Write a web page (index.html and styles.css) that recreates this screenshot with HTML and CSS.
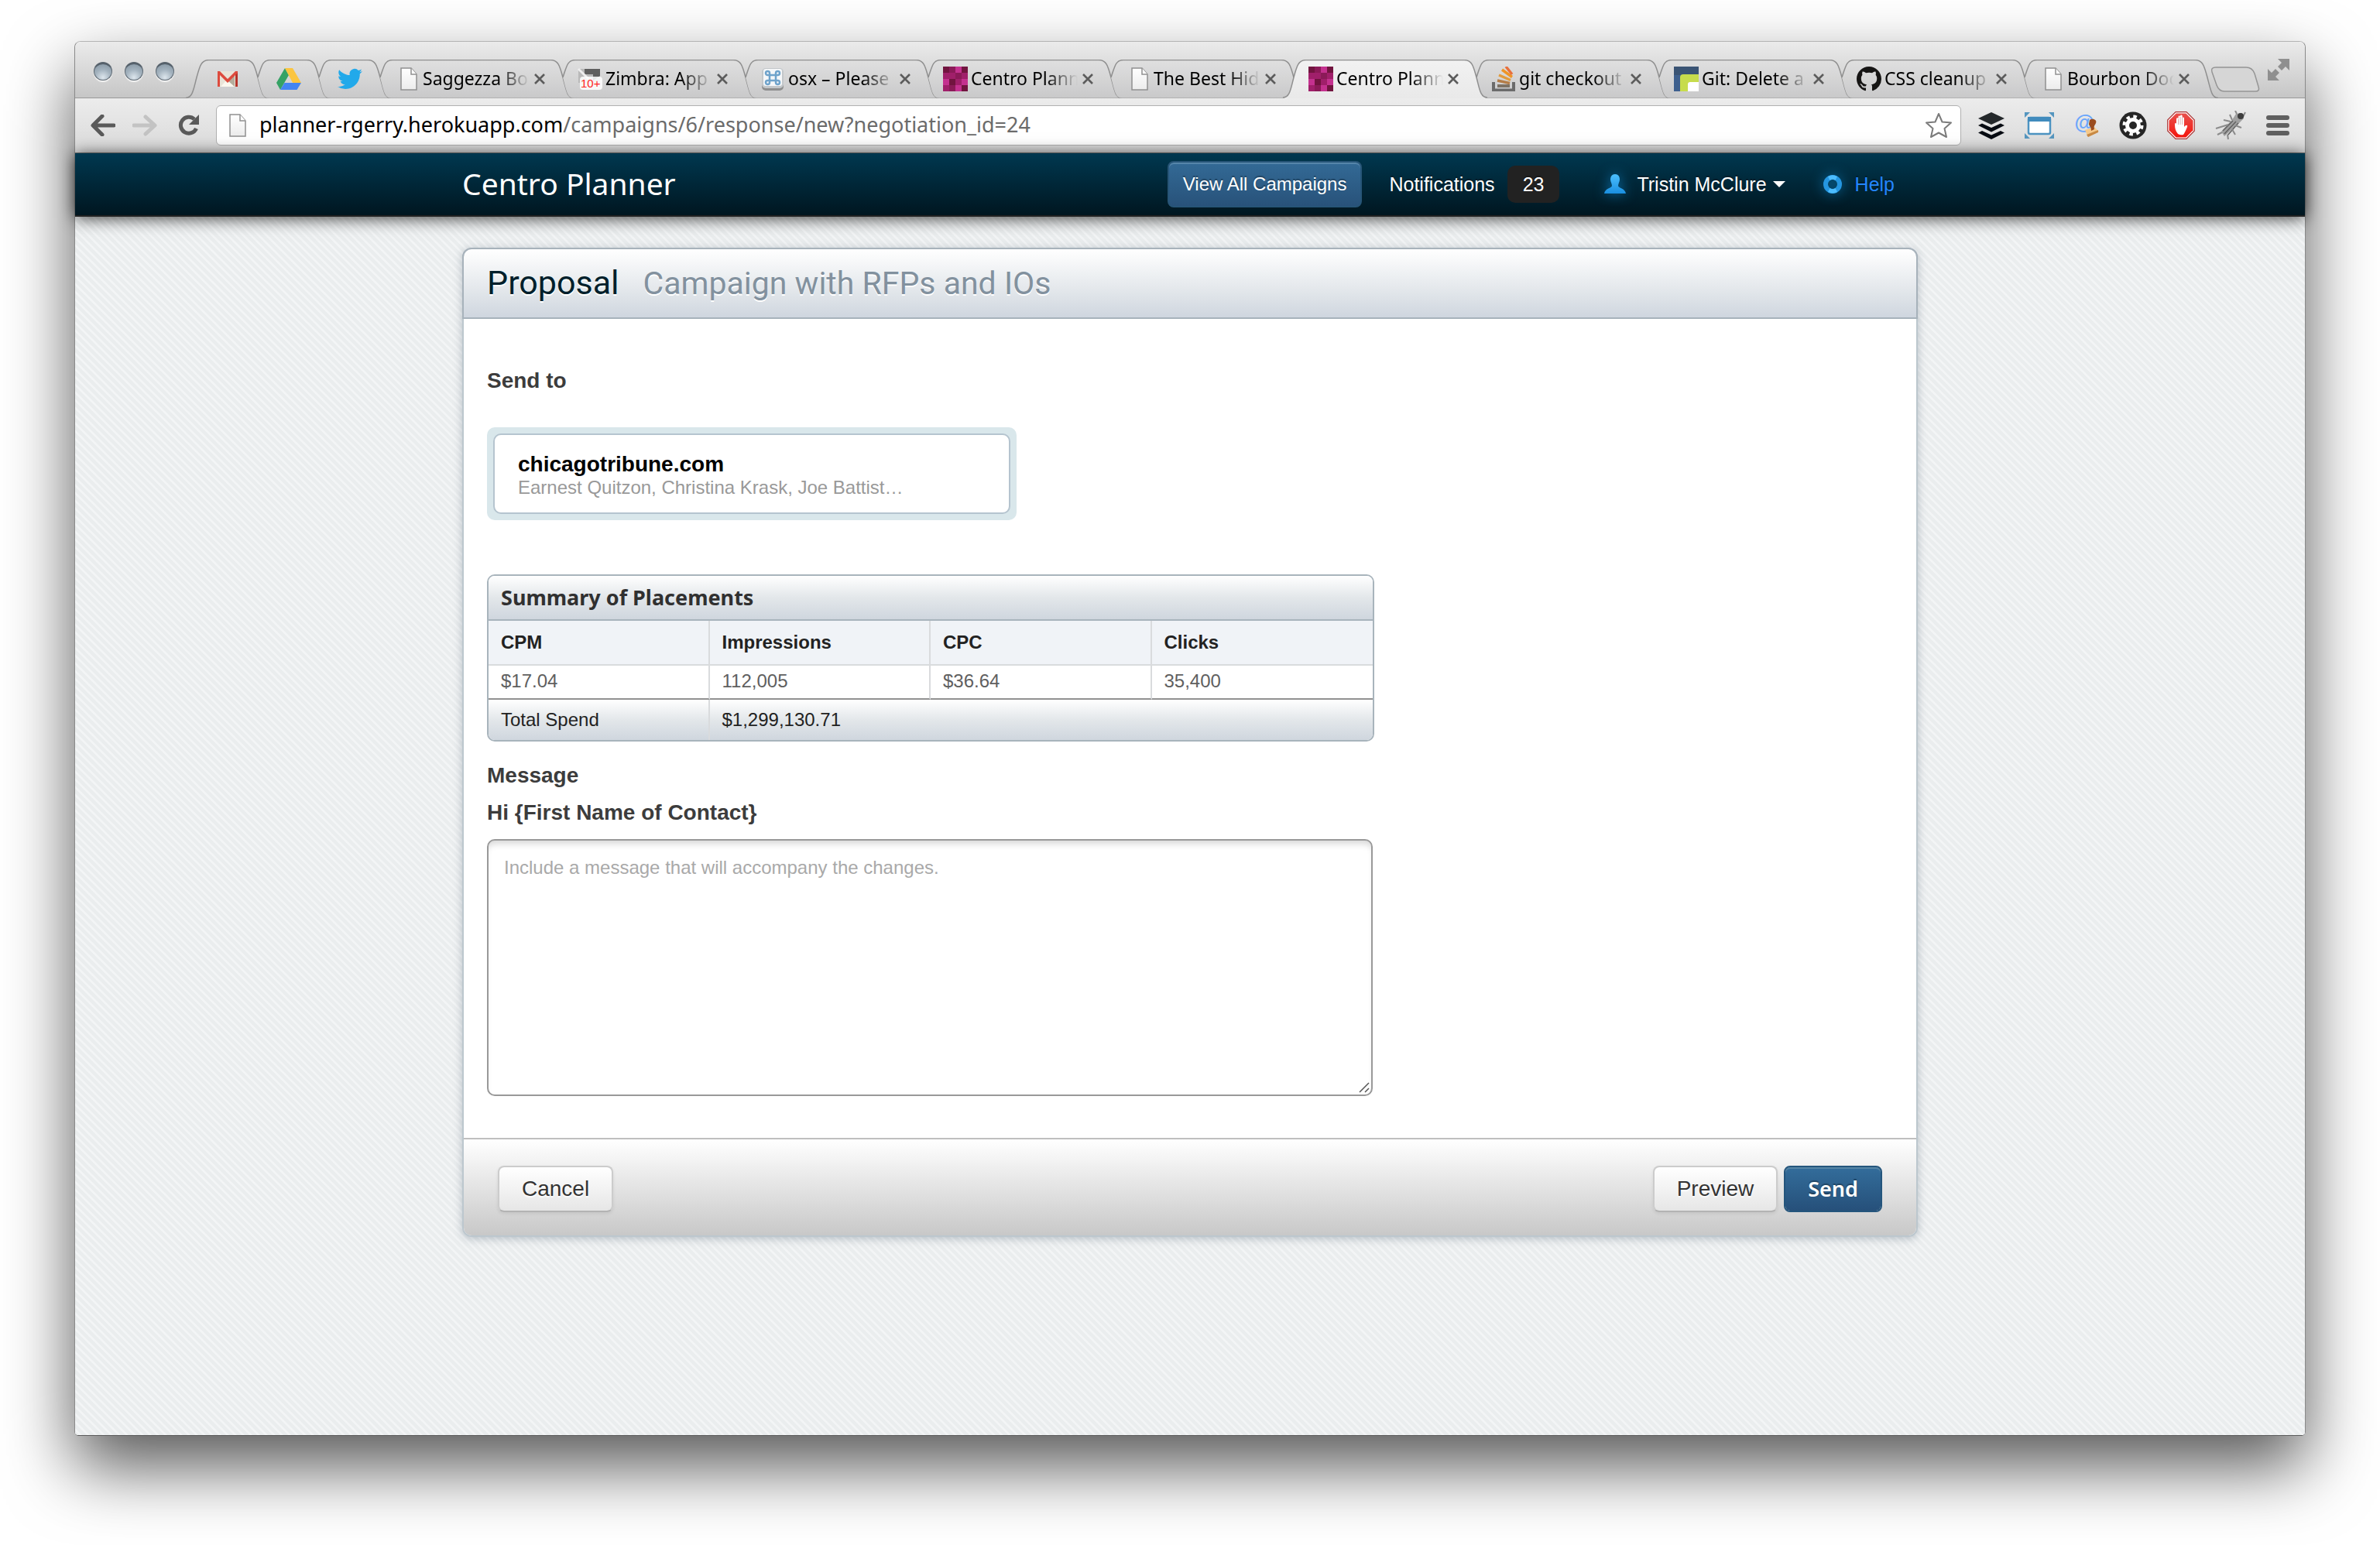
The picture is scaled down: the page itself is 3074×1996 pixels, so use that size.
FILE: index.html
```html
<!DOCTYPE html>
<html lang="en">
<head>
<meta charset="utf-8">
<title>Centro Planner</title>
<link rel="stylesheet" href="styles.css">
</head>
<body>
<svg class="defs" width="0" height="0" aria-hidden="true">
  <defs>
    <linearGradient id="tabFill" x1="0" y1="0" x2="0" y2="1"><stop offset="0" stop-color="#e0e0e0"/><stop offset="1" stop-color="#c9c9ca"/></linearGradient>
    <linearGradient id="activeFill" x1="0" y1="0" x2="0" y2="1"><stop offset="0" stop-color="#f2f2f2"/><stop offset="1" stop-color="#e9e9e9"/></linearGradient>
    <linearGradient id="pageFill" x1="0" y1="0" x2="0" y2="1"><stop offset="0" stop-color="#fff"/><stop offset="1" stop-color="#ececec"/></linearGradient>
    <linearGradient id="redFill" x1="0" y1="0" x2="0" y2="1"><stop offset="0" stop-color="#e8514c"/><stop offset="1" stop-color="#f5160f"/></linearGradient>
    <linearGradient id="blueFill" x1="0" y1="0" x2="0" y2="1"><stop offset="0" stop-color="#4cc0ff"/><stop offset="1" stop-color="#1a8fe0"/></linearGradient>
    <symbol id="tab" viewBox="0 0 264 50">
      <path d="M14 23C19 8 20 .5 30 .5H234C244 .5 246 8 250 23C255 42 256 49.5 264 49.5H28C20 49.5 19 42 14 23Z" fill="url(#tabFill)"/>
      <path d="M14 23C19 8 20 .5 30 .5H234C244 .5 246 8 250 23C255 42 256 49.5 264 49.5" fill="none" stroke="#8f8f8f" stroke-width="1.5"/>
    </symbol>
    <symbol id="tabActive" viewBox="0 0 264 50">
      <path d="M0 50C9 49 10 38 14 23C18 8 20 .5 30 .5H234C244 .5 246 8 250 23C254 38 255 49 264 50Z" fill="url(#activeFill)"/>
      <path d="M0 49C9 49 10 38 14 23C18 8 20 .5 30 .5H234C244 .5 246 8 250 23C254 38 255 49 264 49" fill="none" stroke="#8f8f8f" stroke-width="1.5"/>
    </symbol>
    <symbol id="pin" viewBox="0 0 107 50">
      <path d="M14 23C19 8 20 .5 30 .5H77C87 .5 89 8 93 23C98 42 99 49.5 107 49.5H28C20 49.5 19 42 14 23Z" fill="url(#tabFill)"/>
      <path d="M14 23C19 8 20 .5 30 .5H77C87 .5 89 8 93 23C98 42 99 49.5 107 49.5" fill="none" stroke="#8f8f8f" stroke-width="1.5"/>
    </symbol>
    <symbol id="pinFirst" viewBox="0 0 107 50">
      <path d="M0 49.5C9 49 10 38 14 23C18 8 20 .5 30 .5H77C87 .5 89 8 93 23C98 42 99 49.5 107 49.5Z" fill="url(#tabFill)"/>
      <path d="M0 49.5C9 49 10 38 14 23C18 8 20 .5 30 .5H77C87 .5 89 8 93 23C98 42 99 49.5 107 49.5" fill="none" stroke="#8f8f8f" stroke-width="1.5"/>
    </symbol>
    <symbol id="page" viewBox="0 0 22 30">
      <path d="M1 1H14L21 9V29H1Z" fill="url(#pageFill)" stroke="#909090" stroke-width="1.5"/>
      <path d="M14 1V9H21" fill="#fff" stroke="#909090" stroke-width="1.5"/>
    </symbol>
    <symbol id="close" viewBox="0 0 16 16"><path d="M2 2L14 14M14 2L2 14" stroke="#5c5c5c" stroke-width="2.6" fill="none"/></symbol>
    <symbol id="centro" viewBox="0 0 32 32">
      <rect width="32" height="32" fill="#a01f6a"/>
      <path d="M0 0H8V8H0ZM24 0H32V8H24ZM8 16H16V24H8ZM24 24H32V32H24Z" fill="#71143f"/>
      <path d="M16 0H24V8H16ZM0 16H8V24H0ZM16 24H24V32H16ZM24 16H32V24H24Z" fill="#c4318f"/>
      <path d="M8 0H16V8H8ZM16 8H24V16H16ZM8 24H16V32H8Z" fill="#8b1a58"/>
    </symbol>
  </defs>
</svg>

<div class="window">
  <div class="tabstrip">
    <div class="lights"><i class="light"></i><i class="light"></i><i class="light"></i></div>
    <ul class="tabs">
      <li class="tab tab-pinned"><svg class="tab-shape"><use href="#pinFirst"/></svg>
        <svg class="icon" width="26" height="20" viewBox="0 0 26 20"><path d="M0 0H26V20H0Z" fill="#e9e4d8"/><path d="M4 20L13 10L22 20Z" fill="#fbf8ef"/><path d="M13 12L22 3V20Z" fill="#b5ad9c"/><path d="M0 0H3L13 10L23 0H26V20H23V5L13 15L3 5V20H0Z" fill="#dd4b3e"/><path d="M23 5L26 2V20H23Z" fill="#b53329"/></svg></li>
      <li class="tab tab-pinned"><svg class="tab-shape"><use href="#pin"/></svg>
        <svg class="icon" width="32" height="28" viewBox="0 0 32 28"><path d="M11 0L16 9L5 28L0 19Z" fill="#35a265"/><path d="M11 0H21L32 19H21Z" fill="#fbc540"/><path d="M10.500 19H32L26.500 28H5Z" fill="#4385f3"/></svg></li>
      <li class="tab tab-pinned"><svg class="tab-shape"><use href="#pin"/></svg>
        <svg class="icon" width="32" height="30" viewBox="0 1 24 22"><path fill="#22a9ea" d="M23.953 4.570a10 10 0 01-2.825.775 4.958 4.958 0 002.163-2.723c-.951.555-2.005.959-3.127 1.184a4.920 4.920 0 00-8.384 4.482C7.690 8.095 4.067 6.130 1.640 3.162a4.822 4.822 0 00-.666 2.475c0 1.710.870 3.213 2.188 4.096a4.904 4.904 0 01-2.228-.616v.060a4.923 4.923 0 003.946 4.827 4.996 4.996 0 01-2.212.085 4.936 4.936 0 004.604 3.417 9.867 9.867 0 01-6.102 2.105c-.390 0-.779-.023-1.170-.067a13.995 13.995 0 007.557 2.209c9.053 0 13.998-7.496 13.998-13.985 0-.210 0-.420-.015-.630A9.935 9.935 0 0024 4.590z"/></svg></li>
      <li class="tab"><svg class="tab-shape"><use href="#tab"/></svg>
        <span class="favicon favicon-page"><svg width="22" height="30"><use href="#page"/></svg></span><span class="tab-title">Saggezza Bo</span><button class="tab-close" aria-label="Close tab"><svg width="16" height="16"><use href="#close"/></svg></button></li>
      <li class="tab"><svg class="tab-shape"><use href="#tab"/></svg>
        <span class="favicon"><svg width="32" height="32" viewBox="0 0 32 32"><rect x="1" y="3" width="28" height="18" fill="#b9b9b9"/><path d="M9 3H29V12L20 18V10H9Z" fill="#5f5f5f"/><path d="M1 3L14 16" stroke="#eee" stroke-width="3"/><rect x="3" y="13" width="29" height="17" rx="4" fill="#fff" opacity=".85"/><text x="4" y="27" class="count">10+</text></svg></span><span class="tab-title">Zimbra: App</span><button class="tab-close" aria-label="Close tab"><svg width="16" height="16"><use href="#close"/></svg></button></li>
      <li class="tab"><svg class="tab-shape"><use href="#tab"/></svg>
        <span class="favicon"><svg width="32" height="32" viewBox="0 0 32 32"><rect x="2" y="4" width="28" height="27" rx="5" fill="#8e8e8e"/><rect x="2" y="2" width="28" height="26" rx="5" fill="#c3c7ca"/><rect x="4" y="3" width="24" height="22" rx="3" fill="#f5f7f9"/><path d="M12 11V18M20 11V18M12 11H20M12 18H20M12 11H9.500A2.500 2.500 0 1 1 12 8.500ZM20 11V8.500A2.500 2.500 0 1 1 22.500 11ZM12 18V20.500A2.500 2.500 0 1 1 9.500 18ZM20 18H22.500A2.500 2.500 0 1 1 20 20.500Z" fill="none" stroke="#6fa3cb" stroke-width="2.500"/></svg></span><span class="tab-title">osx – Please</span><button class="tab-close" aria-label="Close tab"><svg width="16" height="16"><use href="#close"/></svg></button></li>
      <li class="tab"><svg class="tab-shape"><use href="#tab"/></svg>
        <span class="favicon"><svg width="32" height="32"><use href="#centro"/></svg></span><span class="tab-title">Centro Plann</span><button class="tab-close" aria-label="Close tab"><svg width="16" height="16"><use href="#close"/></svg></button></li>
      <li class="tab"><svg class="tab-shape"><use href="#tab"/></svg>
        <span class="favicon favicon-page"><svg width="22" height="30"><use href="#page"/></svg></span><span class="tab-title">The Best Hid</span><button class="tab-close" aria-label="Close tab"><svg width="16" height="16"><use href="#close"/></svg></button></li>
      <li class="tab tab-active"><svg class="tab-shape"><use href="#tabActive"/></svg>
        <span class="favicon"><svg width="32" height="32"><use href="#centro"/></svg></span><span class="tab-title">Centro Plann</span><button class="tab-close" aria-label="Close tab"><svg width="16" height="16"><use href="#close"/></svg></button></li>
      <li class="tab"><svg class="tab-shape"><use href="#tab"/></svg>
        <span class="favicon"><svg width="32" height="32" viewBox="0 0 32 32"><path d="M3 20V30.500H29V20" fill="none" stroke="#6b6b6b" stroke-width="4"/><path d="M8 25H24" stroke="#7d7265" stroke-width="4"/><path d="M8 18L24 21.500" stroke="#b47d48" stroke-width="3.500"/><path d="M10 11L25 17.500" stroke="#e29b3c" stroke-width="3.500"/><path d="M14 4L27 13.500" stroke="#ef9526" stroke-width="3.500"/><path d="M19 0L27 10" stroke="#e8703d" stroke-width="3.500"/></svg></span><span class="tab-title">git checkout</span><button class="tab-close" aria-label="Close tab"><svg width="16" height="16"><use href="#close"/></svg></button></li>
      <li class="tab"><svg class="tab-shape"><use href="#tab"/></svg>
        <span class="favicon"><svg width="32" height="32" viewBox="0 0 32 32"><rect width="32" height="32" fill="#3e608e"/><rect width="32" height="11" fill="#3a5474"/><path d="M8 32V14Q8 10 12 10H32V32Z" fill="#c7dc4c"/><path d="M18 32V23Q18 20 21 20H32V32Z" fill="#fff"/></svg></span><span class="tab-title">Git: Delete a</span><button class="tab-close" aria-label="Close tab"><svg width="16" height="16"><use href="#close"/></svg></button></li>
      <li class="tab"><svg class="tab-shape"><use href="#tab"/></svg>
        <span class="favicon"><svg width="32" height="32" viewBox="0 0 16 16"><path fill="#161514" d="M8 0C3.580 0 0 3.580 0 8c0 3.540 2.290 6.530 5.470 7.590.400.070.550-.170.550-.380 0-.190-.010-.820-.010-1.490-2.010.370-2.530-.490-2.690-.940-.090-.230-.480-.940-.820-1.130-.280-.150-.680-.520-.010-.530.630-.010 1.080.580 1.230.820.720 1.210 1.870.870 2.330.660.070-.520.280-.870.510-1.070-1.780-.200-3.640-.890-3.640-3.950 0-.870.310-1.590.820-2.150-.080-.200-.360-1.020.080-2.120 0 0 .670-.210 2.200.820.640-.180 1.320-.270 2-.270s1.360.090 2 .270c1.530-1.040 2.200-.820 2.200-.820.440 1.100.160 1.920.080 2.120.510.560.820 1.270.820 2.150 0 3.070-1.870 3.750-3.650 3.950.290.250.540.730.540 1.480 0 1.070-.010 1.930-.010 2.200 0 .210.150.460.550.380A8.010 8.010 0 0 0 16 8c0-4.420-3.580-8-8-8z"/></svg></span><span class="tab-title">CSS cleanup</span><button class="tab-close" aria-label="Close tab"><svg width="16" height="16"><use href="#close"/></svg></button></li>
      <li class="tab"><svg class="tab-shape"><use href="#tab"/></svg>
        <span class="favicon favicon-page"><svg width="22" height="30"><use href="#page"/></svg></span><span class="tab-title">Bourbon Doc</span><button class="tab-close" aria-label="Close tab"><svg width="16" height="16"><use href="#close"/></svg></button></li>
    </ul>
    <button class="new-tab" aria-label="New tab"><svg width="64" height="34" viewBox="0 0 64 34"><path d="M7 1H46Q54 1 57 9L62 26Q64 32 58 32H18Q11 32 8 24L2 7Q0 1 7 1Z" fill="#d6d6d6" stroke="#959595" stroke-width="1.500"/></svg></button>
    <button class="fullscreen" aria-label="Full screen"><svg width="28" height="28" viewBox="0 0 28 28"><path d="M13 0H28V15L23 10L18 15L13 10L18 5ZM0 13L5 18L10 13L15 18L10 23L15 28H0Z" fill="#8f8f8f"/></svg></button>
  </div>

  <div class="toolbar">
    <button class="tool" aria-label="Back"><svg width="32" height="28" viewBox="0 0 32 28"><path d="M15 2L3 14L15 26M4 14H30" fill="none" stroke="#5a5a5a" stroke-width="5" stroke-linecap="round" stroke-linejoin="round"/></svg></button>
    <button class="tool" aria-label="Forward"><svg width="32" height="28" viewBox="0 0 32 28"><path d="M17 3L29 14L17 25M28 14H2" fill="none" stroke="#c3c3c3" stroke-width="5" stroke-linecap="round" stroke-linejoin="round"/></svg></button>
    <button class="tool tool-reload" aria-label="Reload"><svg width="28" height="28" viewBox="0 0 28 28"><path d="M21 6A10.500 10.500 0 1 0 23.500 18" fill="none" stroke="#5a5a5a" stroke-width="5"/><path d="M27 0V13H14Z" fill="#5a5a5a"/></svg></button>
    <div class="omnibox">
      <svg width="22" height="30"><use href="#page"/></svg>
      <div class="url" role="textbox" aria-label="Address" tabindex="0">planner-rgerry.herokuapp.com<span class="url-path">/campaigns/6/response/new?negotiation_id=24</span></div>
      <svg width="36" height="34" viewBox="0 0 36 34"><path d="M18 2L22.500 12.500L34 13.500L25.500 21L28 32L18 26.500L8 32L10.500 21L2 13.500L13.500 12.500Z" fill="#fff" stroke="#7b7b7b" stroke-width="2" stroke-linejoin="round"/></svg>
    </div>
    <div class="extensions">
      <svg width="34" height="36" viewBox="0 0 34 36"><path d="M17 1L34 9L17 17L0 9Z" fill="#24282b"/><path d="M0 18L5 15.500L17 21L29 15.500L34 18L17 26.500ZM0 27.500L5 25L17 30.500L29 25L34 27.500L17 36Z" fill="#070b12"/></svg>
      <svg width="38" height="36" viewBox="0 0 38 36"><path d="M0 1H7L0 8ZM38 1H31L38 8ZM0 35H7L0 28ZM38 35H31L38 28Z" fill="#5596bf"/><rect x="5" y="8" width="28" height="21" rx="2" fill="#fff" stroke="#4d94c2" stroke-width="2.500"/><rect x="4" y="7" width="30" height="6" fill="#418bbd"/></svg>
      <svg width="32" height="36" viewBox="0 0 32 36"><text x="0" y="23" class="at">@</text><path d="M14 24L26 20L32 26L18 33Z" fill="#f6c98a"/><path d="M16 30L31 24V27L18 33Z" fill="#c98a45"/><path d="M20 11C24 8 30 11 28 15C27 18 25 18 26 23L22 25C22 19 19 19 19 16Z" fill="#9b4c1e"/></svg>
      <svg width="36" height="36" viewBox="0 0 36 36"><circle cx="18" cy="18" r="17.500" fill="#262626"/><circle cx="18" cy="18" r="11.500" fill="none" stroke="#fff" stroke-width="4" stroke-dasharray="4.500 4.530"/><circle cx="18" cy="18" r="7.500" fill="none" stroke="#fff" stroke-width="5"/></svg>
      <svg width="36" height="36" viewBox="0 0 36 36"><path d="M11 .700H25L35.300 11V25L25 35.300H11L.700 25V11Z" fill="#fff" stroke="#a33" stroke-width="1.200"/><path d="M11.700 2.500H24.300L33.500 11.700V24.300L24.300 33.500H11.700L2.500 24.300V11.700Z" fill="url(#redFill)"/><path d="M14 29C11 25 10 22 10 17C10 14 12 14 12 17V10C12 7.500 14.500 7.500 14.500 10V7C14.500 5 17 5 17 7V6C17 4 19.700 4 19.700 6V9C19.700 7 22 7 22 9V20C24 17 27 17 26 20C24 25 23 27 21 30Q17 31 14 29Z" fill="#fff"/><path d="M14.500 10V17M17 7V17M19.700 8V17" stroke="#c99" stroke-width=".800"/></svg>
      <svg width="40" height="38" viewBox="0 0 40 38"><path d="M27 4L35 3L37 10L30 17L22 24L12 33L8 27L16 18L22 12Z" fill="#a0a0a0"/><path d="M12 30L27 14M16 32L30 16M10 26L23 13" stroke="#626262" stroke-width="1.500"/><path d="M20 14L11 12M17 18L1 23M9 28L3 31M22 24L26 31M16 31L17 37M26 19L34 22M22 12L19 5M28 4L26 0M36 8L39 2" stroke="#8c8c8c" stroke-width="2" fill="none"/><circle cx="33" cy="7" r="4" fill="#3e3e3e"/></svg>
      <svg width="30" height="28" viewBox="0 0 30 28"><path d="M3 4H27M3 14H27M3 24H27" stroke="#606060" stroke-width="6" stroke-linecap="round"/></svg>
    </div>
  </div>

  <div class="page">
    <header class="topbar">
      <div class="container topbar-inner">
        <a class="brand" href="#">Centro Planner</a>
        <nav class="nav">
          <a class="nav-button" href="#">View All Campaigns</a>
          <a class="nav-link" href="#">Notifications <span class="badge">23</span></a>
          <a class="nav-link nav-user" href="#"><svg class="glow" width="28" height="26" viewBox="0 0 28 26"><path d="M14 0C18 0 20 3 20 7C20 10 18 12 18 15C18 18 27 18 28 25H0C1 18 10 18 10 15C10 12 8 10 8 7C8 3 10 0 14 0Z" fill="url(#blueFill)"/></svg>Tristin McClure<span class="caret"></span></a>
          <a class="nav-link nav-help" href="#"><svg class="glow" width="26" height="26" viewBox="0 0 26 26"><circle cx="13" cy="13" r="9" fill="none" stroke="#2596e0" stroke-width="6"/><path d="M7 3A12 12 0 0 1 19 3L16.500 8A6 6 0 0 0 9.500 8ZM7 23A12 12 0 0 0 19 23L16.500 18A6 6 0 0 1 9.500 18Z" fill="#4cbcff"/></svg>Help</a>
        </nav>
      </div>
    </header>

    <main class="container panel">
      <header class="panel-head">
        <h1 class="title">Proposal</h1>
        <span class="subtitle">Campaign with RFPs and IOs</span>
      </header>
      <form class="panel-body">
        <h2 class="label">Send to</h2>
        <div class="recipient">
          <div class="recipient-card">
            <strong class="recipient-name">chicagotribune.com</strong>
            <span class="recipient-people">Earnest Quitzon, Christina Krask, Joe Battist…</span>
          </div>
        </div>

        <section class="summary">
          <h2 class="summary-title">Summary of Placements</h2>
          <table class="summary-table">
            <thead><tr><th>CPM</th><th>Impressions</th><th>CPC</th><th>Clicks</th></tr></thead>
            <tbody><tr><td>$17.04</td><td>112,005</td><td>$36.64</td><td>35,400</td></tr></tbody>
            <tfoot><tr><td>Total Spend</td><td colspan="3">$1,299,130.71</td></tr></tfoot>
          </table>
        </section>

        <label class="label message-label" for="message">Message</label>
        <p class="label greeting">Hi {First Name of Contact}</p>
        <div class="message-box">
          <textarea id="message" class="message" placeholder="Include a message that will accompany the changes."></textarea>
          <svg class="grip" width="14" height="14" viewBox="0 0 14 14"><path d="M1 13L13 1M8 13L13 8" stroke="#555" stroke-width="1.500"/></svg>
        </div>
      </form>
      <footer class="panel-foot">
        <button class="button">Cancel</button>
        <div class="actions">
          <button class="button">Preview</button>
          <button class="button button-primary">Send</button>
        </div>
      </footer>
    </main>
  </div>
</div>
</body>
</html>
```
FILE: styles.css
```css
* { box-sizing: border-box; }

body {
  margin: 0;
  min-height: 100vh;
  padding: 53px 96px 141px;
  display: flex;
  flex-direction: column;
  background: #fff;
  font: 24px/30px "Liberation Sans", Arial, sans-serif;
  color: #222;
}

h1, h2, p, ul { margin: 0; padding: 0; }
a { text-decoration: none; }
button { margin: 0; padding: 0; border: 0; background: none; font: inherit; color: inherit; }
svg { display: block; flex: none; }
.defs { position: absolute; }

/* Browser window */
.window {
  flex: 1;
  display: flex;
  flex-direction: column;
  border: 1px solid #8a8a8a;
  border-top-color: #b4b4b4;
  border-bottom-color: #5c5c5c;
  border-radius: 8px 8px 5px 5px;
  box-shadow: 0 40px 88px rgba(0, 0, 0, .66);
  font-family: "Noto Sans", "Open Sans", sans-serif;
}

.tabstrip {
  position: relative;
  z-index: 1;
  display: flex;
  align-items: flex-end;
  height: 72px;
  border-radius: 8px 8px 0 0;
  background: linear-gradient(#ebebeb, #c6c6c6);
}

.lights {
  flex: 0 0 157px;
  display: flex;
  gap: 16px;
  padding: 0 0 22px 24px;
}
.light {
  width: 24px;
  height: 24px;
  border-radius: 50%;
  border: 1px solid #5e6973;
  border-top: 3px solid #56616b;
  background: radial-gradient(circle at 50% 85%, #dde6ed, #a3b2be 50%, #8494a1);
  box-shadow: 0 2px 1px #f4f4f4;
}

.tabs { display: flex; list-style: none; }
.tab {
  position: relative;
  flex: 0 0 236px;
  display: flex;
  align-items: center;
  height: 49px;
  padding-left: 19px;
}
.tab-pinned { flex-basis: 79px; justify-content: center; padding: 0; }
.tab-active { z-index: 1; }
.tab-shape {
  position: absolute;
  left: -14px;
  top: 0;
  width: calc(100% + 28px);
  height: 50px;
}
.icon { position: relative; }
.favicon {
  position: relative;
  width: 32px;
  height: 32px;
  display: flex;
  align-items: center;
  justify-content: center;
}
.favicon-page { padding-left: 4px; }
.count { font: 15px "Liberation Sans", sans-serif; fill: #f22; }
.at { font: italic bold 26px "Liberation Sans", sans-serif; fill: #6ba6fb; }
.tab-title {
  position: relative;
  width: 138px;
  margin: 0 5px 0 4px;
  padding-bottom: 2px;
  white-space: nowrap;
  font-size: 23px;
  line-height: 32px;
  color: #000;
  -webkit-mask-image: linear-gradient(90deg, #000 70%, transparent);
  mask-image: linear-gradient(90deg, #000 70%, transparent);
}
.tab-close { position: relative; }

.new-tab { margin: 0 0 6px 4px; }
.fullscreen { margin: 0 20px 22px auto; }

.toolbar {
  display: flex;
  align-items: center;
  height: 72px;
  padding: 0 20px;
  border-top: 1px solid #999;
  border-bottom: 1px solid #757575;
  background: linear-gradient(#ececec, #dadada);
}
.tool { margin-right: 22px; }
.tool-reload { margin: 0 21px 0 5px; }
.omnibox {
  flex: 1;
  display: flex;
  align-items: center;
  height: 52px;
  padding: 0 10px 0 16px;
  border: 1px solid #b0b0b0;
  border-radius: 6px;
  background: #fff;
}
.url {
  flex: 1;
  margin-left: 17px;
  padding-bottom: 2px;
  font-size: 27px;
  line-height: 40px;
  color: #000;
}
.url-path { color: #6b6b6b; }
.extensions {
  display: flex;
  align-items: center;
  gap: 26px;
  margin-left: 22px;
}

/* Application page */
.page {
  flex: 1;
  border-radius: 0 0 4px 4px;
  background: linear-gradient(45deg, #f3f5f6 12%, #eaedee 18%, #eaedee 44%, #f3f5f6 50%, #f3f5f6 62%, #eaedee 68%, #eaedee 94%, #f3f5f6) 0 0 / 10px 10px;
  font-family: "Liberation Sans", Arial, sans-serif;
}
.container { width: 100%; max-width: 1880px; margin: 0 auto; }

.topbar {
  border-bottom: 2px solid #222;
  background: linear-gradient(#003850, #001620);
  box-shadow: 0 2px 20px rgba(0, 0, 0, .75);
}
.topbar-inner {
  display: flex;
  align-items: center;
  justify-content: space-between;
  height: 80px;
}
.brand {
  padding-bottom: 2px;
  font: 39px/56px "Noto Sans", "Open Sans", sans-serif;
  color: #fff;
}
.nav {
  display: flex;
  align-items: center;
  padding-right: 30px;
  text-shadow: 0 -2px 1px rgba(0, 0, 0, .3);
}
.nav-button {
  padding: 13px 18px;
  border: 2px solid #275577;
  border-radius: 8px;
  background: linear-gradient(#336a96, #28527a);
  box-shadow: inset 0 2px 0 #5585aa;
  color: #fff;
}
.nav-link {
  display: flex;
  align-items: center;
  margin-left: 35px;
  font-size: 25px;
  color: #fff;
}
.badge {
  margin-left: 16px;
  padding: 9px 20px;
  border-radius: 10px;
  background: #222;
}
.nav-user { gap: 14px; margin-left: 58px; }
.nav-help { gap: 16px; margin-left: 48px; color: #2486ff; }
.glow { filter: drop-shadow(0 0 8px #0a6ea8); }
.caret {
  margin-left: -6px;
  border: 8px solid transparent;
  border-top-color: #fff;
  border-bottom: 0;
}

/* Proposal panel */
.panel {
  margin-top: 40px;
  border: 2px solid #bcc7ce;
  border-radius: 12px;
  background: #fff;
  box-shadow: 0 2px 12px rgba(70, 90, 110, .35);
}
.panel-head {
  display: flex;
  align-items: baseline;
  gap: 31px;
  margin: -2px -2px 0;
  padding: 16px 30px 17px;
  border: 2px solid #a7b2bb;
  border-radius: 12px 12px 0 0;
  background: linear-gradient(#fff, #e3e7eb 60%, #cfd6df);
  font-family: Roboto, "Noto Sans", sans-serif;
  text-shadow: 0 2px 0 #fff;
}
.title { font-size: 43px; line-height: 54px; font-weight: 400; color: #001f2b; }
.subtitle { font-size: 41px; line-height: 54px; color: #82919e; }

.panel-body { padding: 64px 30px 54px; }
.label {
  display: block;
  font-size: 28px;
  line-height: 32px;
  font-weight: 700;
  color: #3c3c3c;
}
.recipient {
  width: 684px;
  max-width: 100%;
  margin-top: 44px;
  padding: 8px;
  border-radius: 10px;
  background: #d9e7eb;
}
.recipient-card {
  display: flex;
  flex-direction: column;
  padding: 21px 30px 20px;
  border: 2px solid #b5c4cf;
  border-radius: 10px;
  background: #fff;
}
.recipient-name { font-size: 28px; line-height: 34px; color: #000; }
.recipient-people { line-height: 25px; color: #999; }

.summary {
  width: 1146px;
  max-width: 100%;
  margin-top: 70px;
  border: 2px solid #a8b4bc;
  border-radius: 10px;
  overflow: hidden;
}
.summary-title {
  padding: 8px 16px;
  border-bottom: 2px solid #a8b4bc;
  background: linear-gradient(#fff, #e3e7ea 50%, #cfd6de);
  font: 700 27px/40px "Noto Sans", "Open Sans", sans-serif;
  color: #303030;
}
.summary-table {
  width: 100%;
  table-layout: fixed;
  border-spacing: 0;
  border-collapse: separate;
}
.summary-table th, .summary-table td {
  padding: 0 16px;
  border-right: 2px solid #d9dbdd;
  text-align: left;
}
.summary-table th:last-child, .summary-table td:last-child { border-right: 0; }
.summary-table th {
  height: 58px;
  border-bottom: 2px solid #d9dbdd;
  background: #f0f3f7;
  color: #222;
}
.summary-table tbody td {
  height: 44px;
  padding-bottom: 2px;
  border-bottom: 2px solid #919191;
  color: #606060;
}
.summary-table tfoot { background: linear-gradient(#fff, #e3e7ea 50%, #cfd6de); }
.summary-table tfoot td { height: 52px; color: #222; }

.message-label { margin-top: 28px; }
.greeting { margin-top: 16px; }
.message-box {
  position: relative;
  width: 1144px;
  max-width: 100%;
  margin-top: 18px;
}
.message {
  display: block;
  width: 100%;
  height: 332px;
  padding: 20px;
  border: 2px solid #999;
  border-radius: 10px;
  background: #fff;
  box-shadow: inset 0 8px 8px -4px rgba(0, 0, 0, .16);
  font: inherit;
  resize: none;
}
.message::placeholder { color: #a9a9a9; opacity: 1; }
.grip { position: absolute; right: 4px; bottom: 4px; }

.panel-foot {
  display: flex;
  justify-content: space-between;
  padding: 34px 44px 30px;
  border-top: 2px solid #bfbfbf;
  border-radius: 0 0 10px 10px;
  background: linear-gradient(#fff, #c8c8c8);
}
.actions { display: flex; gap: 8px; }
.button {
  height: 60px;
  padding: 0 29px;
  border: 2px solid #ccc;
  border-bottom-color: #b3b3b3;
  border-radius: 8px;
  background: linear-gradient(#fff, #e6e6e6) padding-box;
  box-shadow: 0 2px 4px rgba(0, 0, 0, .08);
  font-size: 28px;
  color: #333;
  text-shadow: 0 2px 2px #fff;
}
.button-primary {
  border-color: #24557c;
  background: linear-gradient(#336d9b, #26507a) padding-box;
  box-shadow: inset 0 2px 0 #5585a5;
  font: 600 27px/40px "Noto Sans", "Open Sans", sans-serif;
  color: #fff;
  text-shadow: 0 -2px 1px rgba(0, 0, 0, .3);
}
```
